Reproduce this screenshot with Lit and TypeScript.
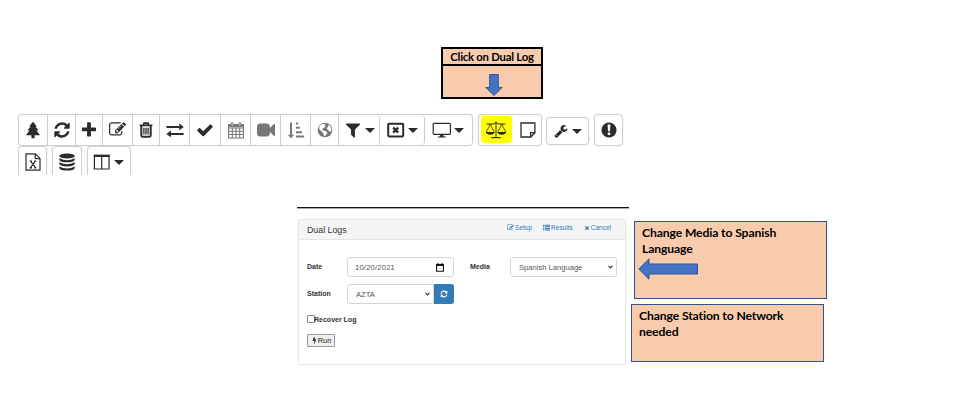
import { LitElement, html, svg, css, SVGTemplateResult } from "lit";
import { customElement, property } from "lit/decorators.js";

const REFRESH = "M1639 1056q0 5-1 7-64 268-268 434.5t-478 166.5q-146 0-282.5-55t-243.5-157l-129 129q-19 19-45 19t-45-19-19-45v-448q0-26 19-45t45-19h448q26 0 45 19t19 45-19 45l-137 137q71 66 161 102t187 36q134 0 250-65t186-179q11-17 53-117 8-23 30-23h192q13 0 22.5 9.5t9.5 22.5zm25-800v448q0 26-19 45t-45 19h-448q-26 0-45-19t-19-45 19-45l138-138q-148-137-349-137-134 0-250 65t-186 179q-11 17-53 117-8 23-30 23h-199q-13 0-22.5-9.5t-9.5-22.5v-7q65-268 270-434.5t480-166.5q146 0 284 55.5t245 156.5l130-129q19-19 45-19t45 19 19 45z";
const PLUS = "M1600 736v192q0 40-28 68t-68 28h-416v416q0 40-28 68t-68 28h-192q-40 0-68-28t-28-68v-416h-416q-40 0-68-28t-28-68v-192q0-40 28-68t68-28h416v-416q0-40 28-68t68-28h192q40 0 68 28t28 68v416h416q40 0 68 28t28 68z";
const EDIT = "M888 1184l116-116-152-152-116 116v56h96v96h56zm440-720q-16-16-33 1l-350 350q-17 17-1 33t33-1l350-350q17-17 1-33zm80 594v190q0 119-84.5 203.5t-203.5 84.5h-832q-119 0-203.5-84.5t-84.5-203.5v-832q0-119 84.5-203.5t203.5-84.5h832q63 0 117 25 15 7 18 23 3 17-9 29l-49 49q-14 14-32 8-23-6-45-6h-832q-66 0-113 47t-47 113v832q0 66 47 113t113 47h832q66 0 113-47t47-113v-126q0-13 9-22l64-64q15-15 35-7t20 29zm-96-738l288 288-672 672h-288v-288zm444 132l-92 92-288-288 92-92q28-28 68-28t68 28l152 152q28 28 28 68t-28 68z";
const CHECK = "M1671 566q0 40-28 68l-724 724-136 136q-28 28-68 28t-68-28l-136-136-362-362q-28-28-28-68t28-68l136-136q28-28 68-28t68 28l294 295 656-657q28-28 68-28t68 28l136 136q28 28 28 68z";
const FILTER = "M1595 295q17 41-14 70l-493 493v742q0 42-39 59-13 5-25 5-27 0-45-19l-256-256q-19-19-19-45v-486l-493-493q-31-29-14-70 17-39 59-39h1280q42 0 59 39z";
const TIMES = "M1490 1322q0 40-28 68l-136 136q-28 28-68 28t-68-28l-294-294-294 294q-28 28-68 28t-68-28l-136-136q-28-28-28-68t28-68l294-294-294-294q-28-28-28-68t28-68l136-136q28-28 68-28t68 28l294 294 294-294q28-28 68-28t68 28l136 136q28 28 28 68t-28 68l-294 294 294 294q28 28 28 68z";
const BOLT = "M1333 566q18 20 7 44l-540 1157q-13 25-42 25-4 0-14-2-17-5-25.5-19t-4.5-30l197-808-406 101q-4 1-12 1-18 0-31-11-18-15-13-39l201-825q4-14 16-23t28-9h328q19 0 32 12.5t13 29.5q0 8-5 18l-171 463 396-98q8-2 12-2 19 0 34 15z";
const WRENCH = "M448 1472q0-26-19-45t-45-19-45 19-19 45 19 45 45 19 45-19 19-45zm644-420l-682 682q-37 37-90 37-52 0-91-37l-106-108q-38-36-38-90 0-53 38-91l681-681q39 98 114.5 173.5t173.5 114.5zm634-435q0 39-23 106-47 134-164.5 217.5t-258.5 83.5q-185 0-316.5-131.5t-131.5-316.5 131.5-316.5 316.5-131.5q58 0 121.5 16.5t107.5 46.5q16 11 16 28t-16 28l-293 169v224l193 107q5-3 79-48.5t135.5-81 70.5-35.5q15 0 23.5 10t8.5 25z";
const VIDEO = "M1792 352v1088q0 42-39 59-13 5-25 5-27 0-45-19l-403-403v166q0 119-84.5 203.5t-203.5 84.5h-704q-119 0-203.5-84.5t-84.5-203.5v-704q0-119 84.5-203.5t203.5-84.5h704q119 0 203.5 84.5t84.5 203.5v165l403-402q18-19 45-19 12 0 25 5 39 17 39 59z";

const glyph = (d: string) => svg`<path transform="scale(.0100446)" d=${d} fill="currentColor"/>`;

// Every icon is drawn on an 18 x 18 grid.
const ICONS: Record<string, SVGTemplateResult> = {
  tree: svg`<path fill="currentColor" d="M9 .8 13 5.4H11.3L14.5 9.3H12.5L16 14.2H10.6V17.2H7.4V14.2H2L5.5 9.3H3.5L6.7 5.4H5Z"/>`,
  refresh: glyph(REFRESH),
  plus: glyph(PLUS),
  edit: glyph(EDIT),
  trash: svg`<g fill="none" stroke="currentColor"><path stroke-width="1.8" d="M2.6 4.4H15.4M6.4 4.2 7 2.2H11L11.6 4.2"/><path stroke-width="2" d="M4.3 4.6V14.6Q4.3 15.7 5.4 15.7H12.6Q13.7 15.7 13.7 14.6V4.6"/><path stroke-width="1.3" d="M6.9 6.8V13.6M9 6.8V13.6M11.1 6.8V13.6"/></g>`,
  exchange: svg`<path fill="currentColor" d="M.4 5H13.2V2.6L17.8 6 13.2 9.3V7H.4ZM17.6 13.9H5V16.2L.3 12.9 5 9.6V11.9H17.6Z"/>`,
  check: glyph(CHECK),
  calendar: svg`<g fill="none" stroke="currentColor"><path stroke-width="1.1" d="M1.6 3.6H16.4V17H1.6Z"/><path stroke-width="1.1" d="M1.6 7H16.4M1.6 10.2H16.4M1.6 13.5H16.4M5.3 7V17M9 7V17M12.7 7V17"/><path stroke-width="2.2" d="M1.8 5H16.2"/><path stroke-width="2.4" stroke-linecap="round" d="M5.2 2.5V4.6M12.8 2.5V4.6"/></g><path stroke="#fff" stroke-width=".8" d="M5.2 2.5V4.8M12.8 2.5V4.8"/>`,
  video: glyph(VIDEO),
  sort: svg`<path fill="currentColor" d="M3 1.4H5V13.8H7.2L4 17.2.8 13.8H3ZM9 1.6H11.2V3.6H9ZM9 5.8H12.8V7.8H9ZM9 10.2H15V12.2H9ZM9 14.6H17.2V16.6H9Z"/>`,
  globe: svg`<circle cx="9" cy="9" r="7.3" fill="currentColor"/><path fill="#fff" d="M4.2 4 7.2 2.7 9.8 3.1 8.6 4.4 9.7 5.6 7.3 7.2 6 8.7 7.6 9.6 10 10.3 11.4 11.8 9.9 13.9 8.3 15.6 7.4 12.4 5.9 10.6 3.6 8.8 3 6.5ZM11.5 4.2 13.6 4.3 15.2 7 15.4 9.6 13.8 11 12.6 9.2 11 8.3 11.2 6.4 12.6 5.6Z"/>`,
  filter: glyph(FILTER),
  boxTimes: svg`<rect x="1.2" y="2.8" width="15" height="12.6" rx=".8" fill="none" stroke="currentColor" stroke-width="2"/><path stroke="currentColor" stroke-width="2.3" d="M6.2 6.6 11.2 11.6M11.2 6.6 6.2 11.6"/>`,
  monitor: svg`<rect x=".2" y="2.3" width="17.2" height="11" rx="1" fill="none" stroke="currentColor" stroke-width="1.2"/><path fill="currentColor" d="M7.3 13.4H10.3L10.7 15.4H12.8V16.5H4.8V15.4H6.9Z"/>`,
  scales: svg`<g fill="none" stroke="currentColor" stroke-width="1"><path d="M9 .6V15.8M-.4 3H6.4Q9 .4 11.6 3H18.4"/><path d="M3.3 3.4-.8 11.2M3.3 3.4 7.2 11.2M14.7 3.4 10.8 11.2M14.7 3.4 18.8 11.2" stroke-width=".8"/><path stroke-width="1.2" d="M4.4 16.6H13.6"/></g><path fill="currentColor" d="M-1.2 11H7.6Q6.9 13.7 3.3 13.7T-1.2 11ZM10.4 11H19.2Q18.3 13.7 14.7 13.7T10.4 11Z"/>`,
  note: svg`<path fill="none" stroke="currentColor" stroke-width="1.3" d="M2 2H15.9V11.8L11.8 16H2ZM15.8 11.6H11.6V15.8"/>`,
  wrench: glyph(WRENCH),
  alert: svg`<circle cx="9" cy="9" r="7.6" fill="currentColor"/><path fill="#fff" d="M7.6 3.5H10.4L10 10.2H8ZM7.8 11.5H10.2V13.9H7.8Z"/>`,
  excel: svg`<path fill="none" stroke="currentColor" stroke-width="1.2" d="M2 .8H11.4L16 5.4V17.2H2ZM11.2 1V5.6H15.8"/><path fill="none" stroke="currentColor" stroke-width="1.2" d="M6.6 8.2 11.4 14.6M11.4 8.2 6.6 14.6M5.6 8H8M10.2 8H12.4M5.6 14.8H8M10.2 14.8H12.4"/>`,
  database: svg`<g fill="currentColor"><ellipse cx="9" cy="3" rx="7.7" ry="2.6"/><path d="M1.3 5.2Q9 9.2 16.7 5.2V7Q15.6 9.3 9 9.3T1.3 7ZM1.3 9.3Q9 13.3 16.7 9.3V11.1Q15.6 13.4 9 13.4T1.3 11.1ZM1.3 13.4Q9 17.4 16.7 13.4V15.2Q15.6 17.6 9 17.6T1.3 15.2Z"/></g>`,
  columns: svg`<path fill="none" stroke="currentColor" stroke-width="1.2" d="M1.4 2.4H16V16H1.4ZM8.7 3V16"/><path stroke="currentColor" stroke-width="2.2" d="M.9 2.9H16.6"/>`,
  times: glyph(TIMES),
  bolt: glyph(BOLT),
  list: svg`<path fill="currentColor" d="M0 2H3V4.6H0ZM4.4 2H18V4.6H4.4ZM0 6H3V8.6H0ZM4.4 6H18V8.6H4.4ZM0 10H3V12.6H0ZM4.4 10H18V12.6H4.4ZM0 14H3V16.6H0ZM4.4 14H18V16.6H4.4Z"/>`,
};

@customElement("ui-icon")
class UiIcon extends LitElement {
  @property() name = "";
  static styles = css`
    :host { display: block; flex: none; width: 18px; height: 18px; }
    svg { display: block; width: 100%; height: 100%; overflow: visible; }
  `;
  render() {
    return html`<svg viewBox="0 0 18 18">${ICONS[this.name]}</svg>`;
  }
}

interface Tool { icon: string; w: number; kind?: string; menu?: boolean }

const ROW_ONE: { cls: string; tools: Tool[] }[] = [
  { cls: "main", tools: [
    { icon: "tree", w: 29 }, { icon: "refresh", w: 28 }, { icon: "plus", w: 27 },
    { icon: "edit", w: 30, kind: "small" }, { icon: "trash", w: 27 }, { icon: "exchange", w: 30 },
    { icon: "check", w: 31 }, { icon: "calendar", w: 30, kind: "muted" },
    { icon: "video", w: 30, kind: "muted" }, { icon: "sort", w: 30, kind: "muted" },
    { icon: "globe", w: 28, kind: "muted" }, { icon: "filter", w: 41, menu: true, kind: "round" },
    { icon: "boxTimes", w: 45, menu: true, kind: "round" }, { icon: "monitor", w: 47, menu: true },
  ] },
  { cls: "compare", tools: [{ icon: "scales", w: 35, kind: "marked" }, { icon: "note", w: 27 }] },
  { cls: "config", tools: [{ icon: "wrench", w: 41, menu: true }] },
  { cls: "notice", tools: [{ icon: "alert", w: 27 }] },
];
const ROW_TWO: Tool[] = [
  { icon: "excel", w: 27 }, { icon: "database", w: 28 }, { icon: "columns", w: 42, menu: true },
];

@customElement("app-root")
class AppRoot extends LitElement {
  static styles = css`
    :host { display: block; width: 962px; height: 402px; overflow: hidden; background: #fff; color: #333;
      font-family: "Liberation Sans", Arial, sans-serif; }
    * { box-sizing: border-box; }
    .page { display: flex; flex-direction: column; height: 402px; padding-top: 47px; }

    .hint { width: 102px; height: 52px; margin-left: 441px; background: #f8cbad; border: 2px solid #000;
      display: flex; flex-direction: column; align-items: center; }
    .hint-title { width: 100%; height: 17px; border-bottom: 2px solid #000; text-align: center; white-space: nowrap;
      font: bold 11.3px/15px Lato, sans-serif; letter-spacing: -.22px; color: #000; }
    .arrow { display: block; }
    .hint .arrow { margin: 8px 0 0 4px; }

    .bar { display: flex; margin: 15px 0 0 18px; height: 32px; align-items: flex-start; }
    .group { display: flex; height: 32px; border: 1px solid #d0d0d0; border-radius: 4px; box-shadow: 0 0 1px #bbb; }
    .tool { display: flex; align-items: center; justify-content: center; height: 30px; padding-bottom: 1px; border-right: 1px solid #ccc; color: #2b2b2b; }
    .tool:last-child { border-right: 0; }
    .tool.muted { color: #777; }
    .small ui-icon { width: 17px; height: 17px; }
    .round { border-radius: 0 4px 4px 0; }
    .caret { border: 5px solid transparent; border-top-color: #2b2b2b; border-bottom: 0; margin: 1px 0 0 4px; }
    .main .caret { margin-left: 3px; }
    .compare { margin-left: 5px; }
    .marked { border-right: 0; }
    .mark { display: flex; align-items: center; justify-content: center; width: 31px; height: 27px; background: #ff0; border-radius: 4px; margin-right: 1px; }
    .config { margin: 3px 0 0 4px; height: 28px; }
    .config .tool { height: 26px; }
    .config ui-icon { width: 14px; height: 14px; }
    .config .caret { margin: 2px 0 0 4px; }
    .notice { margin-left: 5px; }
    .second { display: flex; gap: 5px; margin: 0 0 0 18px; height: 29px; overflow: hidden; }
    .second .group { height: 34px; }
    .second .caret { margin: 1px 2px 0 3px; }

    .work { display: flex; margin: 32px 0 0 297px; align-items: flex-start; }
    .left { width: 332px; }
    .rule { height: 1px; background: #111; box-shadow: 0 1px 0 #aaa; }
    .panel { width: 328px; height: 146px; margin: 11px 0 0 1px; border: 1px solid #e6e6e6; border-radius: 2px; box-shadow: 0 0 1px #ddd; }
    .panel-head { display: flex; align-items: center; height: 20px; padding: 0 14px 0 8px; background: #f5f5f5;
      border-bottom: 1px solid #e4e4e4; font-size: 8.8px; }
    .links { display: flex; margin-left: auto; gap: 11px; font-size: 6.5px; color: #337ab7; margin-top: -4px; }
    .link { display: flex; align-items: center; gap: 1px; }
    .link ui-icon { width: 7px; height: 7px; }
    .link .x { width: 6px; height: 6px; }
    .form { display: grid; grid-template-columns: 40px 107px 16px 40px 107px; row-gap: 7px; padding: 17px 0 0 8px; align-items: center; }
    .label { font-size: 7px; font-weight: bold; margin-top: -2px; }
    .field { display: flex; align-items: center; justify-content: space-between; height: 20px; border: 1px solid #d6d6d6; border-radius: 3px;
      padding: 0 3px 0 8px; font-size: 7.6px; color: #555; white-space: nowrap; }
    .date { padding: 0 9px 0 7px; letter-spacing: .2px; }
    .joined { display: flex; }
    .joined .field { width: 87px; border-radius: 3px 0 0 3px; }
    .reload { width: 20px; height: 20px; background: #337ab7; color: #fff; border-radius: 0 3px 3px 0; display: flex; align-items: center; justify-content: center; }
    .reload ui-icon { width: 8px; height: 8px; }
    .recover { display: flex; align-items: center; margin: 12px 0 0 8px; height: 8px; font-size: 7.1px; letter-spacing: -.05px; font-weight: bold; }
    .box { width: 8px; height: 8px; border: 1px solid #888; border-radius: 1px; margin: -2px -1px 0 0; }
    .run { display: flex; align-items: center; justify-content: center; gap: 0; width: 28px; height: 13px; margin: 10px 0 0 8px;
      border: 1px solid #999; border-radius: 1px; background: #efefef; font-size: 7.4px; color: #222; }
    .run ui-icon { width: 7px; height: 7px; }

    .notes { margin: 14px 0 0 2px; display: flex; flex-direction: column; gap: 5px; color: #000; }
    .note { width: 193px; background: #f8cbad; border: 1px solid #2f528f; padding: 3px 0 0 7px; font: bold 12.2px/16px Lato, sans-serif; letter-spacing: -.13px; }
    .media { height: 78px; margin-left: 3px; }
    .media .arrow { margin: 1px 0 0 -4px; }
    .station { height: 58px; }
  `;

  tool(t: Tool) {
    const icon = html`<ui-icon name=${t.icon}></ui-icon>`;
    return html`<div class="tool ${t.kind ?? ""}" style="width:${t.w}px">
      ${t.kind === "marked" ? html`<div class="mark">${icon}</div>` : icon}
      ${t.menu ? html`<span class="caret"></span>` : ""}
    </div>`;
  }

  render() {
    return html`<div class="page">
      <div class="hint">
        <div class="hint-title">Click on Dual Log</div>
        <svg class="arrow" width="18" height="24" viewBox="0 0 18 24"><path d="M4.5 .5H13.5V14H17.5L9 22.5.5 14H4.5Z" fill="#4472c4" stroke="#2f528f"/></svg>
      </div>
      <div class="bar">${ROW_ONE.map((g) => html`<div class="group ${g.cls}">${g.tools.map((t) => this.tool(t))}</div>`)}</div>
      <div class="second">${ROW_TWO.map((t) => html`<div class="group">${this.tool(t)}</div>`)}</div>
      <div class="work">
        <div class="left">
          <div class="rule"></div>
          <div class="panel">
            <div class="panel-head">Dual Logs
              <div class="links">
                <span class="link"><ui-icon name="edit"></ui-icon>Setup</span>
                <span class="link"><ui-icon name="list"></ui-icon>Results</span>
                <span class="link"><ui-icon class="x" name="times"></ui-icon>Cancel</span>
              </div>
            </div>
            <div class="form">
              <div class="label">Date</div>
              <div class="field date">10/20/2021
                <svg width="8" height="9" viewBox="0 0 8 9"><path d="M.6 1.8H7.4V8.2H.6Z" fill="none" stroke="#111" stroke-width="1.1"/><path d="M0 1H8V3H0ZM1.3 0H2.4V1.5H1.3ZM5.6 0H6.7V1.5H5.6Z" fill="#111"/></svg>
              </div>
              <div></div>
              <div class="label">Media</div>
              <div class="field">Spanish Language ${this.chevron()}</div>
              <div class="label">Station</div>
              <div class="joined">
                <div class="field">AZTA ${this.chevron()}</div>
                <div class="reload"><ui-icon name="refresh"></ui-icon></div>
              </div>
            </div>
            <div class="recover"><span class="box"></span>Recover Log</div>
            <div class="run"><ui-icon name="bolt"></ui-icon>Run</div>
          </div>
        </div>
        <div class="notes">
          <div class="note media">Change Media to Spanish<br>Language
            <svg class="arrow" width="60" height="22" viewBox="0 0 60 22"><path d="M.8 11 11 .8V6H59.5V16H11V21.2Z" fill="#4472c4" stroke="#2f528f"/></svg>
          </div>
          <div class="note station">Change Station to Network<br>needed</div>
        </div>
      </div>
    </div>`;
  }

  chevron() {
    return html`<svg width="5" height="4" viewBox="0 0 5 4"><path d="M.5 .8 2.5 2.8 4.5 .8" fill="none" stroke="#333" stroke-width="1.2"/></svg>`;
  }
}
